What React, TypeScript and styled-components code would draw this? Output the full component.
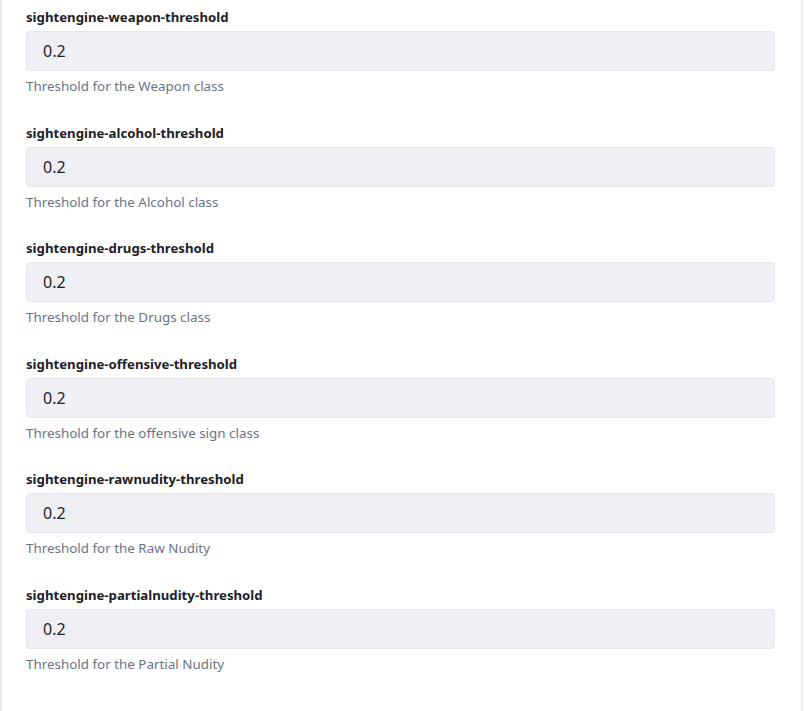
import React from 'react'
import styled, { createGlobalStyle } from 'styled-components'

const GlobalStyle = createGlobalStyle`
  html, body {
    margin: 0;
    padding: 0;
    background: #ffffff;
  }
  body {
    font-family: 'Noto Sans', 'Open Sans', sans-serif;
  }
`

const Panel = styled.div`
  box-sizing: border-box;
  width: 803px;
  min-height: 100vh;
  padding: 7px 26px 0 24px;
  border-left: 2px solid #ededf1;
  border-right: 2px solid #ededf1;
`

const Field = styled.div`
  display: flex;
  flex-direction: column;
  margin-bottom: 26.5px;
`

const Label = styled.label`
  font-size: 13.2px;
  line-height: 20px;
  font-weight: 700;
  color: #1d2127;
  margin-bottom: 4px;
`

const Input = styled.input`
  box-sizing: border-box;
  height: 40px;
  width: 100%;
  padding: 0 16px;
  border: 1px solid #e6e6eb;
  border-radius: 4px;
  background: #f0f0f4;
  color: #1d2127;
  font-family: inherit;
  font-size: 16px;
  &:focus {
    outline: none;
  }
`

const Help = styled.div`
  margin-top: 5px;
  font-size: 13.4px;
  line-height: 20px;
  color: #6b7383;
`

const fields = [
  { name: 'sightengine-weapon-threshold', help: 'Threshold for the Weapon class' },
  { name: 'sightengine-alcohol-threshold', help: 'Threshold for the Alcohol class' },
  { name: 'sightengine-drugs-threshold', help: 'Threshold for the Drugs class' },
  { name: 'sightengine-offensive-threshold', help: 'Threshold for the offensive sign class' },
  { name: 'sightengine-rawnudity-threshold', help: 'Threshold for the Raw Nudity' },
  { name: 'sightengine-partialnudity-threshold', help: 'Threshold for the Partial Nudity' },
]

export default function App() {
  return (
    <>
      <GlobalStyle />
      <Panel>
        {fields.map(f => (
          <Field key={f.name}>
            <Label htmlFor={f.name}>{f.name}</Label>
            <Input id={f.name} defaultValue="0.2" />
            <Help>{f.help}</Help>
          </Field>
        ))}
      </Panel>
    </>
  )
}
